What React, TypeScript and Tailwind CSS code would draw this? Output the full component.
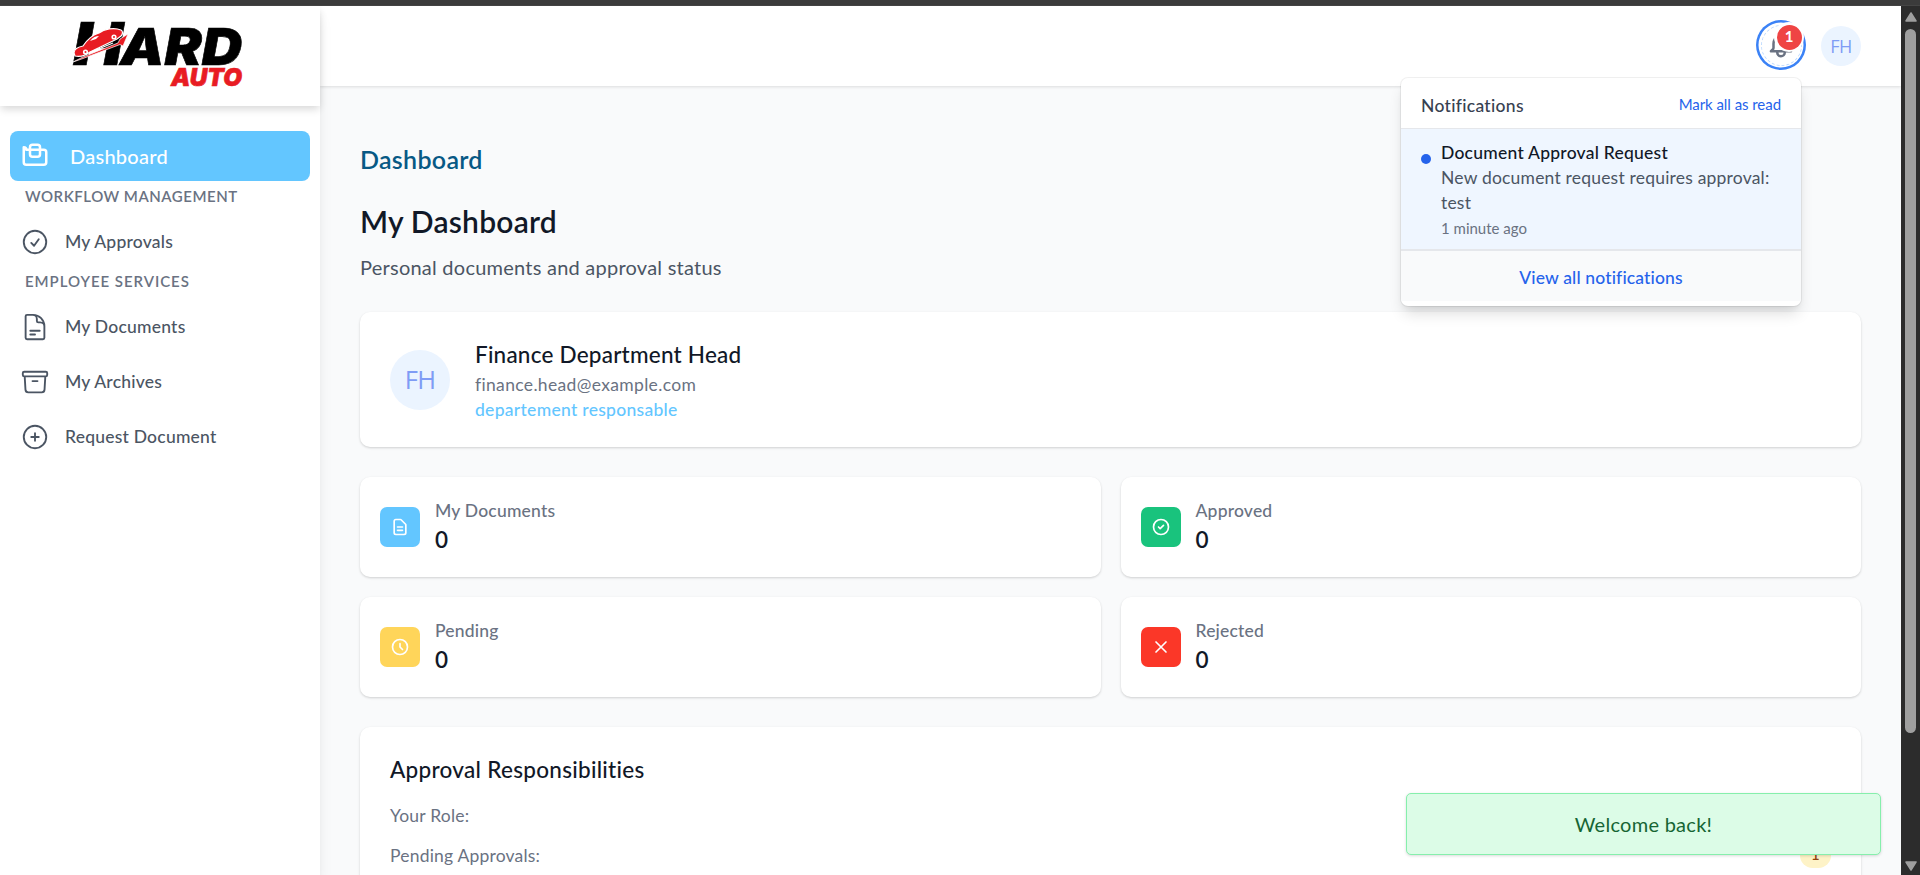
import type { ReactNode } from 'react';

type IconProps = { d: string[]; className?: string; strokeWidth?: number };

function Icon({ d, className = '', strokeWidth = 2 }: IconProps) {
  return (
    <svg
      viewBox="0 0 24 24"
      fill="none"
      stroke="currentColor"
      strokeWidth={strokeWidth}
      strokeLinecap="round"
      strokeLinejoin="round"
      className={className}
    >
      {d.map((p) => (
        <path key={p} d={p} />
      ))}
    </svg>
  );
}

const ICONS = {
  dashboard: [
    'M3 7v10a2 2 0 002 2h14a2 2 0 002-2V9a2 2 0 00-2-2H5a2 2 0 00-2-2z',
    'M8 5a2 2 0 012-2h4a2 2 0 012 2v5.5a2 2 0 01-2 2h-4a2 2 0 01-2-2V5z',
  ],
  approvals: ['M9 12.75 11.25 15 15 9.75M21 12a9 9 0 1 1-18 0 9 9 0 0 1 18 0Z'],
  documents: [
    'M19.5 14.25v-2.625a3.375 3.375 0 0 0-3.375-3.375h-1.5A1.125 1.125 0 0 1 13.5 7.125v-1.5a3.375 3.375 0 0 0-3.375-3.375H8.25m0 12.75h7.5m-7.5 3H12M10.5 2.25H5.625c-.621 0-1.125.504-1.125 1.125v17.25c0 .621.504 1.125 1.125 1.125h12.75c.621 0 1.125-.504 1.125-1.125V11.25a9 9 0 0 0-9-9Z',
  ],
  archives: [
    'm20.25 7.5-.625 10.632a2.25 2.25 0 0 1-2.247 2.118H6.622a2.25 2.25 0 0 1-2.247-2.118L3.75 7.5M10 11.25h4M3.375 7.5h17.25c.621 0 1.125-.504 1.125-1.125v-1.5c0-.621-.504-1.125-1.125-1.125H3.375c-.621 0-1.125.504-1.125 1.125v1.5c0 .621.504 1.125 1.125 1.125Z',
  ],
  plus: ['M12 9v6m3-3H9m12 0a9 9 0 1 1-18 0 9 9 0 0 1 18 0Z'],
  file: [
    'M9 12h6m-6 4h6m2 5H7a2 2 0 01-2-2V5a2 2 0 012-2h5.586a1 1 0 01.707.293l5.414 5.414a1 1 0 01.293.707V19a2 2 0 01-2 2z',
  ],
  check: ['M9 12l2 2 4-4m6 2a9 9 0 11-18 0 9 9 0 0118 0z'],
  clock: ['M12 8v4l3 3m6-3a9 9 0 11-18 0 9 9 0 0118 0z'],
  cross: ['M6 18L18 6M6 6l12 12'],
  bell: [
    'M15 17h5l-1.405-1.405A2.032 2.032 0 0118 14.158V11a6.002 6.002 0 00-4-5.659V5a2 2 0 10-4 0v.341C7.67 6.165 6 8.388 6 11v3.159c0 .538-.214 1.055-.595 1.436L4 17h5m6 0v1a3 3 0 11-6 0v-1m6 0H9',
  ],
};

function Logo() {
  return (
    <svg viewBox="0 0 200 100" className="ml-[60px] h-[100px] w-[200px] overflow-visible">
      <g fontFamily="Inter, sans-serif" fontWeight="900" fontStyle="italic" stroke="#000" strokeWidth="0.6">
        <text x="13" y="59" fontSize="59" textLength="50" lengthAdjust="spacingAndGlyphs">H</text>
        <text x="60" y="59" fontSize="51" textLength="122" lengthAdjust="spacingAndGlyphs">ARD</text>
        <text x="111" y="79.5" fontSize="24" fill="#e81c23" stroke="#e81c23" textLength="71" lengthAdjust="spacingAndGlyphs">AUTO</text>
      </g>
      <g transform="translate(8 11)">
        <path d="M5 45 L15 40 L50 26 L52 22 L60 17 L55 29 L52 27.5 L15 41.5 Z" fill="#e81c23" stroke="#fff" strokeWidth="0.7" />
        <path
          d="M6 36 C6 32 10 30 15 29 C19 23 24 18 31 16 C36 12 46 10 53 13 C55 14 55 17 53 19 L49 22 L22 35 C17 39 12 40 7 39 Z"
          fill="#e81c23"
          stroke="#fff"
          strokeWidth="1.2"
        />
        <path d="M22 24 C25 20 28 19 31 19 L28 22 Z" fill="#fff" />
        <circle cx="17.500" cy="35" r="1.800" fill="#e81c23" stroke="#fff" strokeWidth="1.6" />
        <circle cx="46" cy="20" r="1.800" fill="#e81c23" stroke="#fff" strokeWidth="1.6" />
        <path d="M22 35.500 L45 26" stroke="#fff" strokeWidth="1.2" fill="none" />
      </g>
    </svg>
  );
}

function NavLabel({ children }: { children: ReactNode }) {
  return (
    <div className="h-[30px] pl-[25px] text-[15px] font-semibold leading-[24px] text-gray-500">{children}</div>
  );
}

function NavItem({ icon, children }: { icon: string[]; children: ReactNode }) {
  return (
    <a className="flex h-[55px] items-center gap-[15px] pl-5 text-[17.5px] font-medium tracking-[0.22px] text-[#4b5563]">
      <Icon d={icon} strokeWidth={1.5} className="size-[30px]" />
      <span className="pt-[2px]">{children}</span>
    </a>
  );
}

function Sidebar() {
  return (
    <aside className="relative z-10 flex w-80 shrink-0 flex-col bg-white shadow-[0_10px_15px_-3px_rgba(0,0,0,0.1),0_4px_6px_-2px_rgba(0,0,0,0.05)]">
      <div className="h-[100px] shrink-0 bg-white shadow-[0_4px_8px_-1px_rgba(0,0,0,0.16)]">
        <Logo />
      </div>
      <nav className="pt-[25px]">
        <a className="mx-2.5 mb-[3px] flex h-[50px] items-center gap-5 rounded-[8px] bg-[#63c6ff] pl-2.5 text-xl font-medium tracking-[0.25px] text-white">
          <Icon d={ICONS.dashboard} className="size-[30px]" />
          <span className="pb-px">Dashboard</span>
        </a>
        <NavLabel>
          <span className="tracking-[0.53px]">WORKFLOW MANAGEMENT</span>
        </NavLabel>
        <NavItem icon={ICONS.approvals}>My Approvals</NavItem>
        <NavLabel>
          <span className="tracking-[0.95px]">EMPLOYEE SERVICES</span>
        </NavLabel>
        <NavItem icon={ICONS.documents}>My Documents</NavItem>
        <NavItem icon={ICONS.archives}>My Archives</NavItem>
        <NavItem icon={ICONS.plus}>Request Document</NavItem>
      </nav>
    </aside>
  );
}

function Notifications() {
  return (
    <div className="absolute right-[100px] top-[72px] z-30 h-[228px] w-[400px]">
      <div className="h-full overflow-hidden rounded-[7px] bg-white shadow-[0_0_0_1px_rgba(0,0,0,0.06),0_10px_15px_-3px_rgba(0,0,0,0.14),0_4px_6px_-2px_rgba(0,0,0,0.06)]">
        <div className="flex h-[51px] items-center justify-between border-b border-gray-200 px-5">
          <span className="pt-[6px] text-[17.5px] font-medium tracking-[0.3px] text-[#374151]">Notifications</span>
          <span className="pt-[3px] text-[15px] tracking-[-0.05px] text-[#2563eb]">Mark all as read</span>
        </div>
        <div className="flex h-[122px] gap-[10px] border-b-2 border-gray-200 bg-[#eff6ff] pl-5 pt-[10.5px]">
          <span className="mt-[14px] size-2.5 shrink-0 rounded-full bg-[#2563eb]" />
          <div className="flex flex-col text-[17.5px] leading-[25px] tracking-[0.2px]">
            <span className="font-medium tracking-[0.24px] text-[#111827]">Document Approval Request</span>
            <span className="w-[335px] text-[#4b5563]">New document request requires approval: test</span>
            <span className="pt-px text-[15px] tracking-[0px] text-gray-500">1 minute ago</span>
          </div>
        </div>
        <div className="h-[50px] bg-[#f9fafb] text-center text-[17.5px] font-medium leading-[53px] tracking-[0.15px] text-[#2563eb]">
          View all notifications
        </div>
      </div>
    </div>
  );
}

function TopBar() {
  return (
    <header className="relative h-20 shrink-0 bg-white shadow-[0_1px_3px_rgba(0,0,0,0.12)]">
      <div className="flex h-20 items-center justify-end gap-[15px] pr-10">
        <div className="relative mb-[2px] flex size-[50px] items-center justify-center rounded-full bg-white shadow-[inset_0_0_0_2.5px_#3b82f6]">
          <span className="absolute inset-[4.5px] rounded-full border border-dashed border-[#bfdbfe]" />
          <Icon d={ICONS.bell} className="size-[30px] text-gray-500" />
          <span className="absolute right-[2px] top-[2px] flex size-[30px] items-center justify-center rounded-full bg-white">
            <span className="flex size-[25px] items-center justify-center rounded-full bg-[#ef4444] pb-px text-[15px] font-bold text-white">
              1
            </span>
          </span>
        </div>
        <span className="flex size-10 items-center justify-center rounded-full bg-[#ebf4ff] font-['Open_Sans'] text-[18px] text-[#7f9cf5]">
          <span className="-mx-1 tracking-[-0.6px]">FH</span>
        </span>
      </div>
      <Notifications />
    </header>
  );
}

function StatCard({ icon, color, label }: { icon: string[]; color: string; label: string }) {
  return (
    <div className="flex h-[100px] gap-[15px] rounded-[10px] bg-white pl-5 shadow-[0_1px_3px_rgba(0,0,0,0.1),0_1px_2px_rgba(0,0,0,0.08)]">
      <span className={`mt-[30px] flex size-10 items-center justify-center rounded-[7px] text-white ${color}`}>
        <Icon d={icon} className="size-5" />
      </span>
      <div className="flex flex-col gap-0.5 pt-[21px]">
        <span className="text-[17.5px] font-medium leading-[25px] tracking-[0.2px] text-gray-500">{label}</span>
        <span className="text-[22.5px] font-semibold leading-[30px] text-[#111827]">0</span>
      </div>
    </div>
  );
}

function MainContent() {
  return (
    <main className="flex min-h-0 flex-1 flex-col overflow-hidden px-10 pt-14">
      <h2 className="h-[35px] shrink-0 text-[25px] font-semibold leading-[35px] tracking-[0.3px] text-[#075985]">Dashboard</h2>
      <h1 className="mt-6 h-10 shrink-0 text-[30px] font-semibold leading-10 tracking-[0.22px] text-[#111827]">My Dashboard</h1>
      <p className="mt-[11px] h-[30px] shrink-0 text-xl leading-[30px] tracking-[0.24px] text-[#4b5563]">
        Personal documents and approval status
      </p>

      <section className="mt-[30px] flex h-[135px] shrink-0 items-center gap-[25px] rounded-[10px] bg-white pl-[30px] shadow-[0_1px_3px_rgba(0,0,0,0.1),0_1px_2px_rgba(0,0,0,0.08)]">
        <span className="flex size-[60px] items-center justify-center rounded-full bg-[#ebf4ff] font-['Open_Sans'] text-[25.5px] text-[#7f9cf5]">
          <span className="-mx-1 tracking-[-0.8px]">FH</span>
        </span>
        <div className="flex flex-col">
          <span className="text-[22.5px] font-medium leading-[34px] tracking-[0.22px] text-[#111827]">Finance Department Head</span>
          <span className="text-[17.5px] leading-[25px] tracking-[0.34px] text-gray-500">finance.head@example.com</span>
          <span className="text-[17.5px] font-medium leading-[25px] tracking-[0.29px] text-[#63c6ff]">departement responsable</span>
        </div>
      </section>

      <section className="mt-[30px] grid shrink-0 grid-cols-2 gap-5">
        <StatCard icon={ICONS.file} color="bg-[#63c6ff]" label="My Documents" />
        <StatCard icon={ICONS.check} color="bg-[#19c37d]" label="Approved" />
        <StatCard icon={ICONS.clock} color="bg-[#ffd55a]" label="Pending" />
        <StatCard icon={ICONS.cross} color="bg-[#fb3728]" label="Rejected" />
      </section>

      <section className="mt-[30px] h-[260px] shrink-0 rounded-[10px] bg-white px-[30px] pt-[25px] shadow-[0_1px_3px_rgba(0,0,0,0.1),0_1px_2px_rgba(0,0,0,0.08)]">
        <h3 className="text-[22.5px] font-medium leading-[35px] tracking-[0.29px] text-[#111827]">Approval Responsibilities</h3>
        <div className="mt-4 flex flex-col gap-[15px] text-[17.5px] leading-[25px] tracking-[0.2px] text-gray-500">
          <span>Your Role:</span>
          <div className="flex justify-between">
            <span>Pending Approvals:</span>
            <span className="h-[25px] w-[31px] rounded-full bg-[#fef3c7] text-center text-[15px] font-medium leading-[23px] text-[#92400e]">1</span>
          </div>
        </div>
      </section>
    </main>
  );
}

function Scrollbar() {
  return (
    <div className="flex w-[19px] shrink-0 flex-col items-center justify-between bg-[#2c2c2c] pb-1 pt-[6px]">
      <svg viewBox="0 0 12 10" className="h-2.5 w-3">
        <path d="M6 1 L11 9 L1 9 Z" fill="#9f9f9f" stroke="#9f9f9f" strokeWidth="1.5" strokeLinejoin="round" />
      </svg>
      <div className="mb-[128px] mt-[7px] w-[11px] flex-1 rounded-full bg-[#9f9f9f]" />
      <svg viewBox="0 0 12 10" className="h-2.5 w-3">
        <path d="M6 9 L11 1 L1 1 Z" fill="#9f9f9f" stroke="#9f9f9f" strokeWidth="1.5" strokeLinejoin="round" />
      </svg>
    </div>
  );
}

export default function App() {
  return (
    <div className="relative flex h-[875px] w-[1920px] flex-col overflow-hidden bg-[#f9fafb] font-['Lato',sans-serif] [font-variant-ligatures:none]">
      <div className="h-1.5 shrink-0 border-b border-[#454545] bg-[#3b3b3b]" />
      <div className="flex min-h-0 flex-1">
        <Sidebar />
        <div className="flex min-w-0 flex-1 flex-col">
          <TopBar />
          <MainContent />
        </div>
        <Scrollbar />
      </div>
      <div className="absolute bottom-5 right-[39px] z-40 flex h-[62px] w-[475px] items-center justify-center rounded-[5px] border border-[#86efac] bg-[#dcfce7] text-xl tracking-[0.27px] text-[#166534] shadow-[0_1px_3px_rgba(0,0,0,0.15)]">
        Welcome back!
      </div>
    </div>
  );
}
